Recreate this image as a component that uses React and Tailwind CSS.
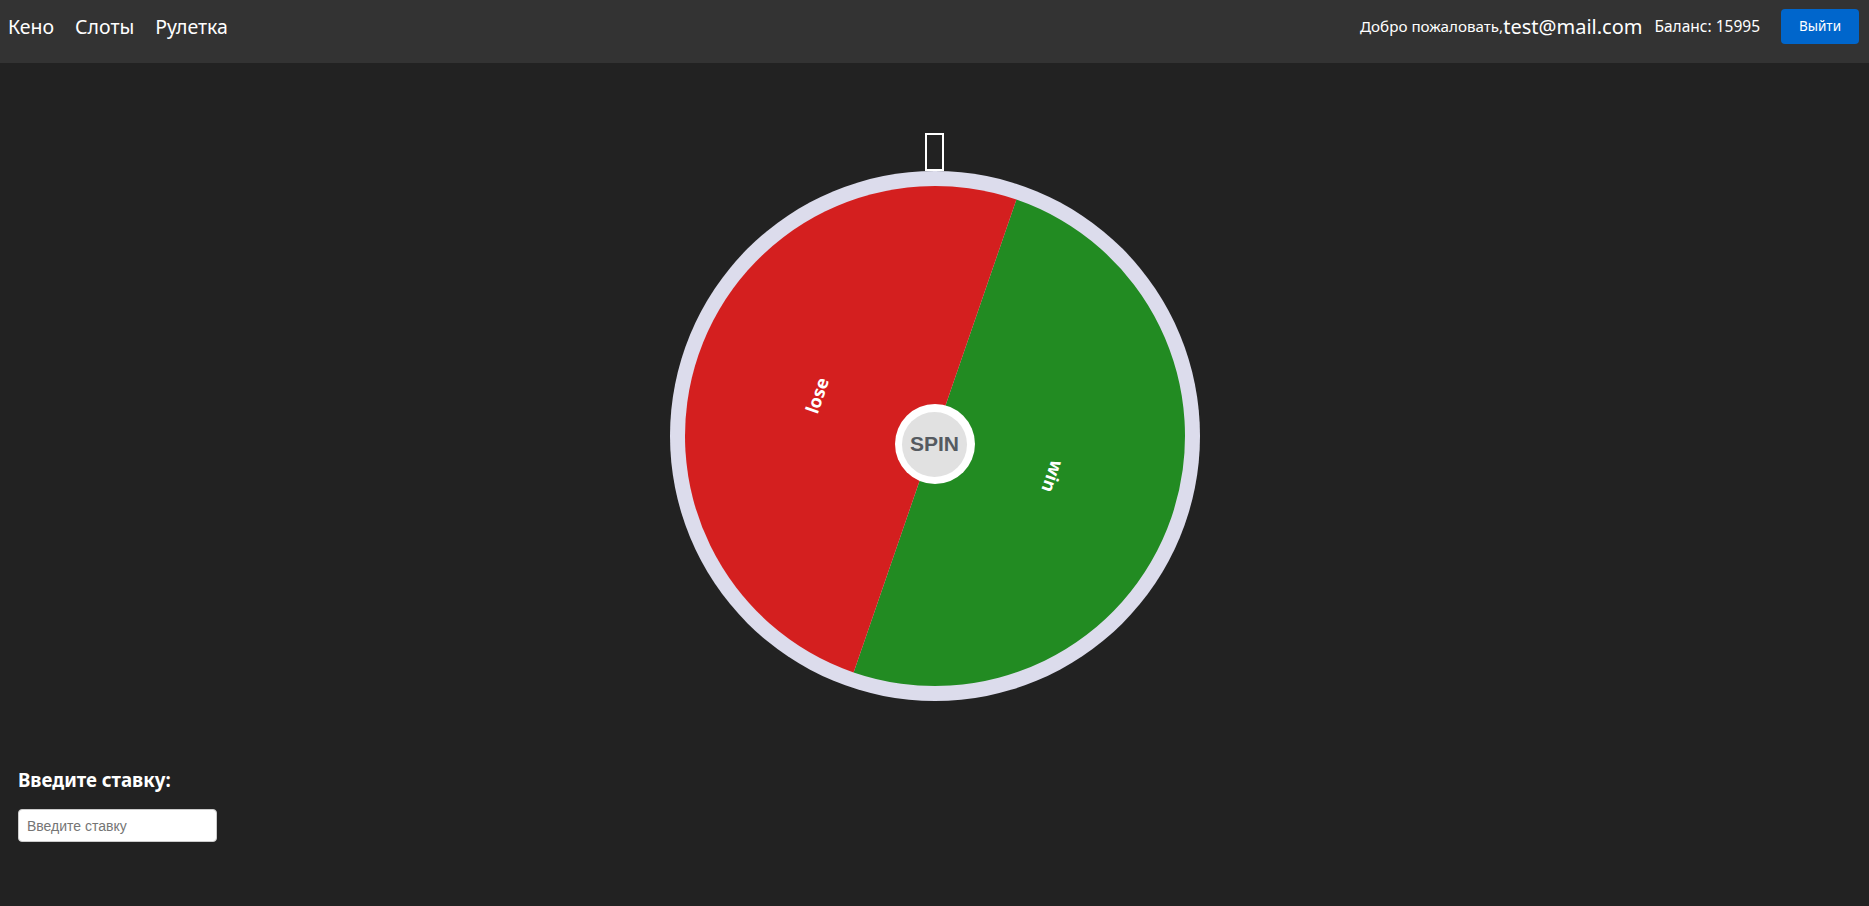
const NAV_LINKS = ['Кено', 'Слоты', 'Рулетка'];

const CX = 265;
const R = 250;
const DIVIDER = 19;

function point(deg, r) {
  const rad = (deg * Math.PI) / 180;
  return [CX + r * Math.sin(rad), CX - r * Math.cos(rad)];
}

function Wheel() {
  const [ax, ay] = point(DIVIDER, R);
  const [bx, by] = point(DIVIDER + 180, R);
  const [lx, ly] = point(DIVIDER - 90, 125);
  const [wx, wy] = point(DIVIDER + 90, 125);

  return (
    <div className="relative w-[530px] h-[530px]">
      <svg width="530" height="530" viewBox="0 0 530 530" className="block">
        <circle cx={CX} cy={CX} r={265} fill="#dcdcec" />
        <path d={`M${CX},${CX} L${ax},${ay} A${R},${R} 0 0 1 ${bx},${by} Z`} fill="#228b22" />
        <path d={`M${CX},${CX} L${bx},${by} A${R},${R} 0 0 1 ${ax},${ay} Z`} fill="#d41f1f" />
        <text
          x={lx}
          y={ly}
          fill="#fff"
          fontSize="18"
          fontWeight="700"
          fontFamily="'Noto Sans', sans-serif"
          textAnchor="middle"
          dominantBaseline="central"
          transform={`rotate(${DIVIDER - 90} ${lx} ${ly})`}
        >
          lose
        </text>
        <text
          x={wx}
          y={wy}
          fill="#fff"
          fontSize="18"
          fontWeight="700"
          fontFamily="'Noto Sans', sans-serif"
          textAnchor="middle"
          dominantBaseline="central"
          transform={`rotate(${DIVIDER + 90} ${wx} ${wy})`}
        >
          win
        </text>
      </svg>
      <button
        type="button"
        className="absolute left-[225px] top-[233px] w-[80px] h-[80px] rounded-full bg-white flex items-center justify-center"
      >
        <span className="w-[65px] h-[65px] rounded-full bg-[#e1e1e1] flex items-center justify-center font-['Liberation_Sans',sans-serif] font-bold text-[21px] text-[#555a60]">
          SPIN
        </span>
      </button>
    </div>
  );
}

export default function App() {
  return (
    <div className="min-h-[906px] bg-[#222222] font-['Noto_Sans',sans-serif] text-white">
      <nav className="h-[63px] bg-[#333333] flex items-start justify-between pt-[9px] pl-[8px] pr-[10px]">
        <div className="flex items-center h-[35px] gap-[21px] text-[19.5px]">
          {NAV_LINKS.map((link) => (
            <a key={link} href="#" className="text-white">
              {link}
            </a>
          ))}
        </div>
        <div className="flex items-center h-[35px]">
          <span className="text-[15.2px]">Добро пожаловать,</span>
          <span className="text-[20px]">test@mail.com</span>
          <span className="text-[15.5px] ml-[12px]">Баланс: 15995</span>
          <button
            type="button"
            className="ml-[21px] w-[78px] h-[35px] rounded-[4px] bg-[#0066cc] text-white text-[13.5px]"
          >
            Выйти
          </button>
        </div>
      </nav>

      <main className="flex flex-col">
        <div className="flex flex-col items-center pt-[70px]">
          <div className="w-[19px] h-[38px] border-2 border-white" />
          <Wheel />
        </div>

        <div className="pl-[18px] pt-[66px]">
          <h3 className="text-[18.7px] font-bold leading-[25px]">Введите ставку:</h3>
          <input
            type="text"
            placeholder="Введите ставку"
            className="mt-[17px] w-[199px] h-[33px] rounded-[4px] bg-white border border-[#cccccc] px-[8px] text-[14px] text-black placeholder:text-[#757575] font-['Liberation_Sans',sans-serif] outline-none"
          />
        </div>
      </main>
    </div>
  );
}
